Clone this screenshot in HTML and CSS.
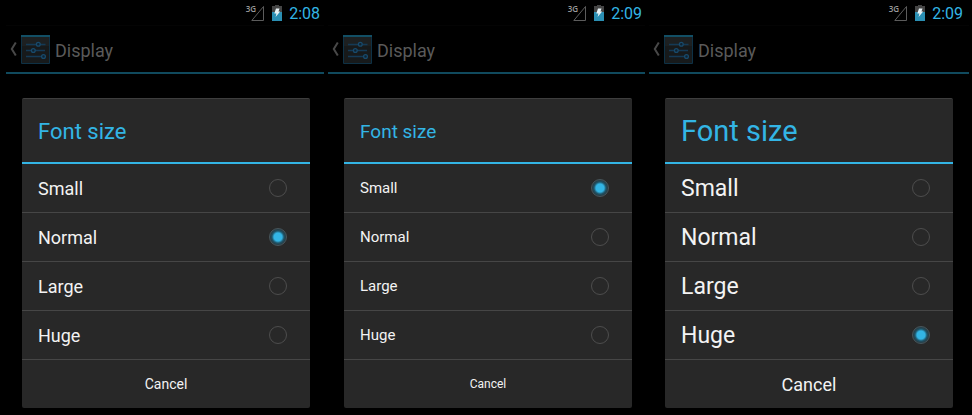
FILE: index.html
```html
<!DOCTYPE html>
<html lang="en">
<head>
<meta charset="utf-8">
<title>Display – Font size</title>
<link rel="stylesheet" href="styles.css">
</head>
<body>
<svg class="symbols" aria-hidden="true">
  <symbol id="signal" viewBox="0 0 13 16"><path d="M12.5 1.5V15.5H.8Z" fill="none" stroke="#5c5c5c"/></symbol>
  <symbol id="battery" viewBox="0 0 10 16">
    <path d="M3 0h4v1h3v6H0V1h3z" fill="#454545"/>
    <path d="M0 7h10v9H0z" fill="#2b8fb3"/>
    <path d="M4 3.500h3.500L6.500 6.500H8.200L3.600 12 4.400 8.500H2.300z" fill="#e8f2f5"/>
  </symbol>
  <symbol id="back" viewBox="0 0 7 14"><path d="M5.8.5 1.800 7l4 6.500" fill="none" stroke="#484848" stroke-width="2"/></symbol>
  <symbol id="settings" viewBox="0 0 29 29">
    <path d="M.5.5h28v28H.5z" fill="#171a1b" stroke="#0e3145"/>
    <path d="M1 2h27v9H1z" fill="#1d2021"/>
    <path d="M0 0h29v2H0z" fill="#124f65"/>
    <path d="M5 9.500h10.500M19 9.500h5.500M5 15.500h5.500M14 15.500h10M5 21.500h15.500" stroke="#143a56" stroke-width="1.400"/>
    <g fill="#0f2230" stroke="#184a6b" stroke-width="1.300"><circle cx="17.300" cy="9.300" r="1.900"/><circle cx="12.300" cy="15.500" r="1.900"/><circle cx="22.500" cy="21.500" r="1.900"/></g>
  </symbol>
</svg>
<main class="screens">
  <section class="screen normal">
    <div class="status"><span class="network">3G</span><svg class="signal"><use href="#signal"/></svg><svg class="battery"><use href="#battery"/></svg><time>2:08</time></div>
    <header class="bar"><a href="#" aria-label="Back"><svg class="back"><use href="#back"/></svg><svg class="settings"><use href="#settings"/></svg></a><h1>Display</h1></header>
    <form class="dialog">
      <h2>Font size</h2>
      <label class="option">Small<input type="radio" name="size"></label>
      <label class="option">Normal<input type="radio" name="size" checked></label>
      <label class="option">Large<input type="radio" name="size"></label>
      <label class="option">Huge<input type="radio" name="size"></label>
      <button type="button">Cancel</button>
    </form>
  </section>
  <section class="screen small">
    <div class="status"><span class="network">3G</span><svg class="signal"><use href="#signal"/></svg><svg class="battery"><use href="#battery"/></svg><time>2:09</time></div>
    <header class="bar"><a href="#" aria-label="Back"><svg class="back"><use href="#back"/></svg><svg class="settings"><use href="#settings"/></svg></a><h1>Display</h1></header>
    <form class="dialog">
      <h2>Font size</h2>
      <label class="option">Small<input type="radio" name="size" checked></label>
      <label class="option">Normal<input type="radio" name="size"></label>
      <label class="option">Large<input type="radio" name="size"></label>
      <label class="option">Huge<input type="radio" name="size"></label>
      <button type="button">Cancel</button>
    </form>
  </section>
  <section class="screen huge">
    <div class="status"><span class="network">3G</span><svg class="signal"><use href="#signal"/></svg><svg class="battery"><use href="#battery"/></svg><time>2:09</time></div>
    <header class="bar"><a href="#" aria-label="Back"><svg class="back"><use href="#back"/></svg><svg class="settings"><use href="#settings"/></svg></a><h1>Display</h1></header>
    <form class="dialog">
      <h2>Font size</h2>
      <label class="option">Small<input type="radio" name="size"></label>
      <label class="option">Normal<input type="radio" name="size"></label>
      <label class="option">Large<input type="radio" name="size"></label>
      <label class="option">Huge<input type="radio" name="size" checked></label>
      <button type="button">Cancel</button>
    </form>
  </section>
</main>
</body>
</html>
```
FILE: styles.css
```css
* { box-sizing: border-box; }

body {
  margin: 0;
  background: #000;
  color: #f3f3f3;
  font-family: Roboto, "Liberation Sans", sans-serif;
}

.symbols { position: absolute; width: 0; height: 0; }

.screens {
  display: grid;
  grid-template-columns: 318fr 317fr 320fr;
  gap: 4px;
  padding: 0 3px 7px 6px;
}

.normal { --title: 22px; --option: 18px; --action: 14px; --edge: 14px; }
.small { --title: 19px; --option: 15px; --action: 12px; --edge: 13px; }
.huge { --title: 29px; --option: 23px; --action: 18px; --edge: 16px; }

.status {
  display: flex;
  align-items: center;
  justify-content: flex-end;
  height: 26px;
  padding-right: calc(var(--edge) - 10px);
  border-bottom: 1px solid #040404;
}

.network {
  align-self: flex-start;
  margin: 4px -5px 0 0;
  color: #9a9a9a;
  font-family: "Open Sans", sans-serif;
  font-size: 8px;
  font-weight: 600;
  line-height: 10px;
}

.signal { width: 13px; height: 16px; }
.battery { width: 10px; height: 16px; margin: 0 7px 0 8px; }

time {
  padding-top: 2px;
  color: #33b5e5;
  font-size: 16px;
  line-height: 23px;
}

.bar {
  display: flex;
  align-items: center;
  gap: 5px;
  height: 48px;
  padding-left: 4px;
  border-bottom: 2px solid #104a5e;
}

.bar a { display: flex; align-items: center; gap: 4px; }
.back { width: 7px; height: 14px; }
.settings { width: 29px; height: 29px; }

h1 {
  margin: 0;
  padding-top: 4px;
  color: #5a5a5a;
  font-size: 18px;
  font-weight: 400;
  line-height: 24px;
}

.dialog {
  margin: 24px var(--edge) 0 16px;
  overflow: hidden;
  background: #282828;
  border-top: 1px solid #3e3e3e;
  border-radius: 2px;
}

h2 {
  margin: 0;
  padding: 2px 16px 0;
  border-bottom: 2px solid #33b5e5;
  color: #33b5e5;
  font-size: var(--title);
  font-weight: 400;
  line-height: 61px;
}

.option {
  display: flex;
  align-items: center;
  justify-content: space-between;
  height: 49px;
  padding: 0 23px 0 16px;
  border-bottom: 1px solid #464646;
  font-size: var(--option);
}

input {
  appearance: none;
  width: 18px;
  height: 18px;
  margin: 0;
  border: 1px solid #4d4d4d;
  border-radius: 50%;
}

input:checked {
  border-color: #47565c;
  background: radial-gradient(circle, #33b5e5 0 4px, #1f5468 6px, #273a42 8px);
}

button {
  display: block;
  width: 100%;
  height: 48px;
  padding: 0;
  border: 0;
  background: none;
  color: inherit;
  font-family: inherit;
  font-size: var(--action);
}
```
